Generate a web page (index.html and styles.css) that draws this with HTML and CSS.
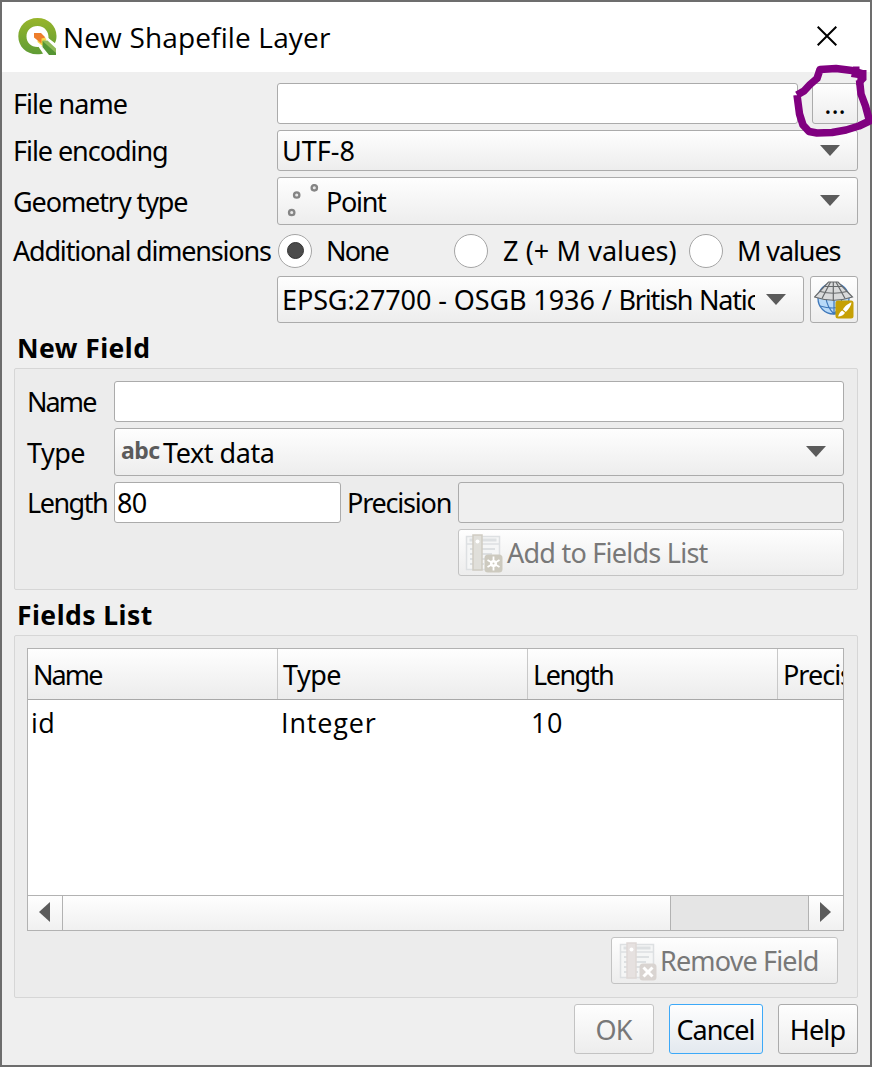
FILE: index.html
```html
<!DOCTYPE html>
<html lang="en">
<head>
<meta charset="utf-8">
<title>New Shapefile Layer</title>
<link rel="stylesheet" href="styles.css">
</head>
<body>
<div class="window">
  <header class="titlebar">
    <svg class="logo" viewBox="0 0 39 38">
      <defs><linearGradient id="q" x1="0" y1="0" x2="0" y2="1"><stop offset="0" stop-color="#98b52b"/><stop offset="1" stop-color="#5f9c35"/></linearGradient></defs>
      <path fill="url(#q)" d="M19.500 0C30 0 38.500 7.500 38.500 18c0 3-.6 5.500-2 8l-6-5.500c.5-7-4-12.500-11-12.500-6.500 0-11 4.500-11 10.500S13 29 19.500 29l4-.5 3.500 6.500c-2.500 1-5 1.300-8 1.300C8 36.300.3 28.500.3 18.300S8.500 0 19.500 0z"/>
      <path fill="#fff" d="M22 26l7 11h-3l-6-9zM29 19l9 7-1 3-9-8z"/>
      <path fill="#f6d74a" d="M20 19.500l5-1 3.500 2.500-4 7-5-4z"/>
      <path fill="#ee7e2b" d="M16 15h7l4.500 4.500-4 1v5L16 19.500z"/>
      <path fill="#8fb958" d="M24.500 22.500h5l8.500 8v6L24.500 23.500z"/>
      <path fill="#559534" d="M24.500 23l13.500 12v2h-7l-6.500-8z"/>
    </svg>
    <h1 class="title">New Shapefile Layer</h1>
    <svg class="close" viewBox="0 0 20 20"><path d="M.7.700l18.600 18.600M19.300.700L.7 19.300"/></svg>
  </header>

  <main class="content">
    <section class="options">
      <label class="label w-fn">File name</label>
      <div class="controls file-row"><div class="input path"></div><div class="button browse"><span>...</span></div></div>

      <label class="label w-enc">File encoding</label>
      <div class="combo enc"><span class="w-utf">UTF-8</span><i class="arrow"></i></div>

      <label class="label w-geo">Geometry type</label>
      <div class="combo geo">
        <svg class="points" viewBox="0 0 32 34"><g fill="#e8e8e8" stroke="#858585" stroke-width="2.300"><circle cx="4.700" cy="28.500" r="2.700"/><circle cx="9.700" cy="11" r="2.700"/><circle cx="27.300" cy="3.800" r="2.700"/></g></svg>
        <span class="w-point">Point</span><i class="arrow"></i>
      </div>

      <label class="label w-dim">Additional dimensions</label>
      <div class="radios">
        <i class="radio on"></i><span class="r-none">None</span>
        <i class="radio"></i><span class="r-z">Z (+ M values)</span>
        <i class="radio"></i><span class="r-m">M values</span>
      </div>

      <div class="controls crs-row">
        <div class="combo crs"><span class="crs-name">EPSG:27700 - OSGB 1936 / <span class="crs-grid">British National Grid</span></span><i class="arrow"></i></div>
        <div class="button globe">
          <svg viewBox="0 0 40 38">
            <circle cx="19.500" cy="17.500" r="15.500" fill="#b9daf8" stroke="#3f78ba" stroke-width="1.300"/>
            <path d="M6 25q13 4 26 0M12 17q1 9 8 16M20 17v16M28 17q-1 9-8 16" fill="none" stroke="#3f78ba" stroke-width="1.200"/>
            <path d="M14.500 1h9.500L38.500 16q-19 6.500-38 0z" fill="#d9dadb" stroke="#66696b" stroke-width="1.200"/>
            <path d="M10 5.500h18.500M6 10.500q13.500 3.500 27 0M16.500 1L8 17.500M19.300 1v19M22 1l9 16.500" fill="none" stroke="#66696b" stroke-width="1.200"/>
            <rect x="21.500" y="19.500" width="18" height="18" rx="2.500" fill="#c6a005"/>
            <path d="M37.500 21.500c-3 .5-7 4-8.500 7l2.800 2.500c3-3 5.500-6.500 5.700-9.500zM28.200 29.500c-2 1-3 3-4.200 6 3 0 6-1.500 7-3.700z" fill="#fff"/>
          </svg>
        </div>
      </div>
    </section>

    <h2 class="heading nf">New Field</h2>
    <section class="group new-field">
      <label class="label w-name">Name</label><div class="input name"></div>
      <label class="label w-type">Type</label>
      <div class="combo type"><b class="abc">abc</b><span class="w-text">Text data</span><i class="arrow"></i></div>
      <label class="label w-len">Length</label>
      <div class="len-row"><div class="input length"><span>80</span></div><label class="w-prec">Precision</label><div class="input precision"></div></div>
      <div class="button add disabled">
        <svg class="table-icon" viewBox="0 0 38 40">
          <g fill="#f5f6f6" stroke="#dde0e2" stroke-width="1.500"><path d="M1.500 3.500h33v33h-33zM1.500 11h33"/><path d="M4.500 7h27" stroke-width="3"/><path d="M5 16h25M5 21h22M5 26h16M5 31h14" stroke-width="1.800"/></g>
          <rect x="8" y="2" width="9" height="35" fill="#e0dfda" stroke="#cfccc2" stroke-width="1.500"/><circle cx="12.500" cy="8.500" r="2" fill="#fff"/>
          <rect x="19.500" y="21.500" width="18" height="18" rx="3.500" fill="#cdcabf"/>
          <path d="M28.500 23.500v14M22.500 27l12 7M34.500 27l-12 7" stroke="#fff" stroke-width="1.800"/><circle cx="28.500" cy="30.500" r="3.500" fill="#fff"/><circle cx="28.500" cy="30.500" r="1" fill="#cdcabf"/>
        </svg>
        <span class="w-add">Add to Fields List</span>
      </div>
    </section>

    <h2 class="heading fl">Fields List</h2>
    <section class="group fields-list">
      <div class="table">
        <div class="thead"><div><span class="h-name">Name</span></div><div><span class="h-type">Type</span></div><div><span class="h-len">Length</span></div><div><span class="h-prec">Precision</span></div></div>
        <div class="row"><div>id</div><div class="c-int">Integer</div><div class="c-ten">10</div></div>
        <div class="scroll"><div class="sbtn"><i class="left"></i></div><div class="thumb"></div><div class="track"></div><div class="sbtn end"><i class="right"></i></div></div>
      </div>
      <div class="button remove disabled">
        <svg class="table-icon" viewBox="0 0 38 40">
          <g fill="#f5f6f6" stroke="#dde0e2" stroke-width="1.500"><path d="M1.500 3.500h33v33h-33zM1.500 11h33"/><path d="M4.500 7h27" stroke-width="3"/><path d="M5 16h25M5 21h22M5 26h16M5 31h14" stroke-width="1.800"/></g>
          <rect x="8" y="2" width="9" height="35" fill="#e6e1e0" stroke="#ded8d6" stroke-width="1.500"/><circle cx="12.500" cy="8.500" r="2" fill="#fff"/>
          <rect x="20.500" y="22.500" width="17" height="17" rx="3.500" fill="#d9d4d1"/>
          <path d="M24.500 26.500l9 9M33.500 26.500l-9 9" stroke="#fff" stroke-width="3"/>
        </svg>
        <span class="w-rem">Remove Field</span>
      </div>
    </section>

    <footer class="footer">
      <div class="button ok disabled"><span>OK</span></div>
      <div class="button cancel"><span>Cancel</span></div>
      <div class="button help"><span>Help</span></div>
    </footer>
  </main>
</div>
<svg class="marker" viewBox="0 0 102 180"><path d="M27 95L34 91L40 84.500L47 78.500L50 69.500L66 68.500L82 70.500L92 73.500M89.500 80L91 94L95.500 106L99.500 121L89 126L76 130L62 132.500L47 133L39 131.500L33 125L29.500 114L27 95"/><path d="M83 66.500h6.500v3.500h7v10l-5 5h-5l1-7-6.500-1z" class="blot"/></svg>
</body>
</html>
```
FILE: styles.css
```css
* { box-sizing: border-box; }
body {
  margin: 0;
  width: 872px;
  height: 1067px;
  overflow: hidden;
  position: relative;
  font: 27px/40px "Noto Sans", "Open Sans", sans-serif;
  letter-spacing: -0.8px;
  color: #000;
  white-space: nowrap;
}
h1, h2 { margin: 0; }
i { font-style: normal; flex: none; }
svg { flex: none; display: block; }

.window { width: 872px; height: 1067px; border: 2px solid #6d6d6d; background: #efefef; }
.titlebar { height: 70px; background: #fff; display: flex; align-items: center; padding: 0 33px 0 16px; }
.logo { width: 39px; height: 38px; margin-top: -1px; }
.title { flex: 1; margin: 0 0 0 6px; font: 400 28px/40px "Open Sans", sans-serif; letter-spacing: 0.15px; }
.close { width: 20px; height: 20px; margin-top: -2px; fill: none; stroke: #000; stroke-width: 2; }
.content { padding: 11px 12px 0 11px; }

.options {
  display: grid;
  grid-template-columns: 264px 581px;
  grid-template-rows: 41px 41px 48px 39px 47px;
  row-gap: 6px;
}
.options .label { align-self: center; }
.w-fn { letter-spacing: -0.95px; }
.w-enc { letter-spacing: -1.05px; }
.w-geo { letter-spacing: -1.1px; padding-top: 1px; }
.w-dim { letter-spacing: -1.2px; }
.controls { display: flex; grid-column: 2; }
.input { background: #fff; border: 1px solid #ababab; border-radius: 3px; height: 41px; padding-left: 2px; }
.button, .combo {
  display: flex;
  align-items: center;
  background: linear-gradient(#fefefe, #ededed);
  border: 1px solid #ababab;
  border-radius: 3px;
}
.combo { padding: 0 17px 0 4px; }
.combo .arrow { margin-left: auto; border: 10px solid transparent; border-top: 11px solid #5b5b5b; border-bottom: 0; }
.path { width: 521px; }
.browse { width: 46px; height: 41px; margin-left: 14px; justify-content: center; letter-spacing: 0; }
.w-utf { letter-spacing: 0; }
.geo { padding-left: 9px; }
.geo .arrow, .type .arrow { margin-top: -1px; }
.points { width: 32px; height: 34px; margin-top: -1px; }
.w-point { margin: 2px 0 0 7px; letter-spacing: -1.3px; }
.radios { display: flex; align-items: center; }
.radio { width: 34px; height: 34px; margin-left: 1px; border: 1px solid #a5a5a5; border-radius: 50%; background: #fff; display: flex; align-items: center; justify-content: center; }
.on::after { content: ""; width: 15px; height: 15px; border-radius: 50%; background: #4b4b4b; border: 1px solid #333; }
.r-none { width: 141px; padding-left: 14px; letter-spacing: -1.7px; }
.r-z { width: 200px; padding-left: 15px; letter-spacing: -0.1px; word-spacing: 0.5px; }
.r-m { padding-left: 14px; letter-spacing: -1.1px; word-spacing: 0; }
.crs { width: 527px; }
.crs-name { width: 473px; overflow: hidden; letter-spacing: -0.1px; }
.crs-grid { letter-spacing: -1.2px; word-spacing: 1px; }
.globe { width: 48px; margin-left: 6px; justify-content: center; }
.globe svg { width: 40px; height: 38px; }

.heading { font: 700 26.5px/40px "Noto Sans", sans-serif; height: 45px; padding: 5px 0 0 4px; letter-spacing: 0.45px; }
.group { margin-left: 1px; border: 1px solid #d6d6d6; border-radius: 2px; background: #ececec; padding: 12px; }
.new-field {
  height: 222px;
  display: grid;
  grid-template-columns: 87px 730px;
  grid-template-rows: 41px 48px 41px 47px;
  row-gap: 6px;
}
.new-field .label { align-self: center; }
.new-field .w-name, .h-name { letter-spacing: -1.9px; }
.w-type, .h-type { letter-spacing: -0.5px; }
.w-type, .w-text { padding-top: 2px; }
.w-len, .h-len { letter-spacing: -1.5px; }
.w-text { letter-spacing: -0.45px; }
.type { padding-left: 6px; }
.abc { font: 700 23px/30px "Noto Sans", sans-serif; color: #5b5b5b; letter-spacing: -0.5px; width: 42px; margin-top: -5px; }
.len-row { display: flex; }
.length { width: 227px; }
.w-prec { width: 117px; padding: 1px 0 0 6px; letter-spacing: -1.2px; }
.precision { flex: 1; background: #efefef; }
.add { grid-column: 2; margin-left: 344px; padding-left: 6px; }
.table-icon { width: 38px; height: 40px; }
.disabled { color: #787878; border-color: #c3c3c3; }
.w-add { margin-left: 4px; letter-spacing: -0.75px; }
.w-rem { margin-left: 3px; letter-spacing: -0.85px; }

.fields-list { height: 363px; }
.table { width: 817px; height: 283px; background: #fff; border: 1px solid #b2b2b2; overflow: hidden; display: flex; flex-direction: column; }
.thead { flex: none; height: 51px; display: grid; grid-template-columns: 250px 250px 250px 65px; background: linear-gradient(#fefefe, #ececec); border-bottom: 1px solid #a8a8a8; }
.thead div { overflow: hidden; padding: 6px 0 0 5px; border-right: 1px solid #c8c8c8; }
.thead div:last-child { border: 0; }
.h-prec { letter-spacing: -1px; }
.row { display: grid; grid-template-columns: 250px 250px 250px; flex: 1; padding: 3px 0 0 3px; font-family: "Open Sans", sans-serif; letter-spacing: 0.5px; }
.c-int { letter-spacing: 0.85px; }
.scroll { flex: none; height: 36px; border-top: 1px solid #b2b2b2; display: flex; background: linear-gradient(#fefefe, #f0f0f0); margin-bottom: -1px; }
.sbtn { flex: none; width: 35px; border-right: 1px solid #b2b2b2; padding: 6px 0 0 11px; }
.sbtn.end { border: 0; }
.left, .right { display: block; width: 0; border: 10px solid transparent; }
.left { border-right: 11px solid #5b5b5b; border-left: 0; }
.right { border-left: 11px solid #5b5b5b; border-right: 0; }
.thumb { width: 607px; flex: none; }
.track { width: 139px; flex: none; background: #e5e5e5; border: solid #b2b2b2; border-width: 0 1px; }
.remove { width: 227px; height: 47px; margin: 6px 7px 0 auto; padding-left: 7px; }

.footer { display: flex; justify-content: flex-end; gap: 15px; margin-top: 6px; }
.footer .button { height: 50px; width: 80px; justify-content: center; padding: 2px 1px 0 0; }
.footer .cancel { width: 94px; border-color: #3da9f8; background: linear-gradient(#fefefe, #e3e9ef); letter-spacing: -1px; }

.marker { position: absolute; left: 770px; top: 0; width: 102px; height: 180px; fill: none; stroke: #800080; stroke-width: 7.5; stroke-linejoin: round; }
.blot { fill: #800080; stroke: none; }
```
